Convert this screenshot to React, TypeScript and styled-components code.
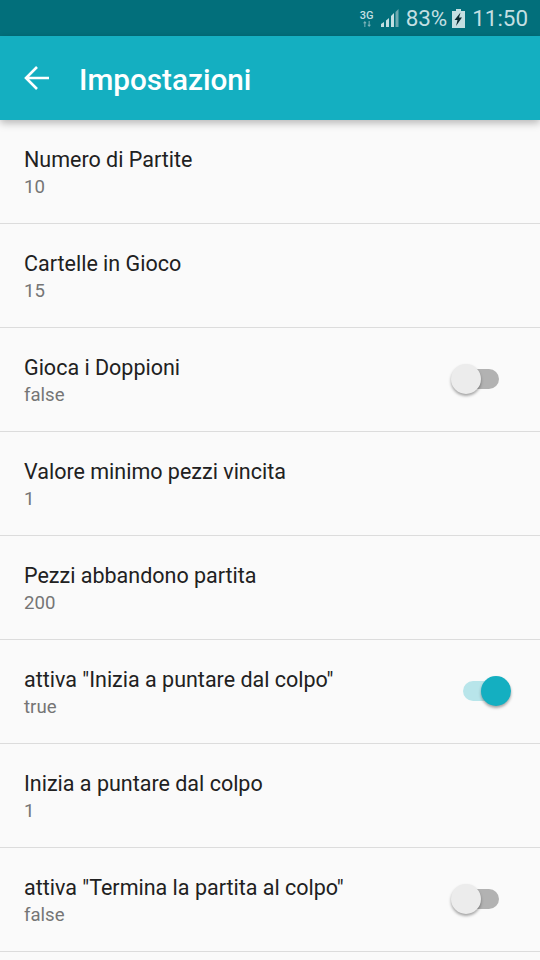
import React from "react";
import styled, { createGlobalStyle } from "styled-components";

const Global = createGlobalStyle`
  html, body { margin: 0; padding: 0; background: #fafafa; }
  body { font-family: Roboto, "Liberation Sans", sans-serif; }
`;

const Screen = styled.div`
  width: 540px;
  height: 960px;
  overflow: hidden;
  background: #fafafa;
  display: flex;
  flex-direction: column;
`;

const StatusBar = styled.div`
  height: 36px;
  flex: none;
  background: #026f7b;
  display: flex;
  align-items: center;
  justify-content: flex-end;
  padding-right: 12px;
  color: #c4dfe2;
  font-size: 22.4px;
  line-height: 36px;
`;

const NetLabel = styled.div`
  display: flex;
  flex-direction: column;
  align-items: center;
  margin-right: 6px;
  width: 14px;
`;

const NetText = styled.span`
  font-size: 11px;
  line-height: 11px;
  font-weight: 500;
  margin-top: 1px;
`;

const Percent = styled.span`
  margin-left: 7px;
`;

const Clock = styled.span`
  margin-left: 7px;
`;

const Battery = styled.svg`
  margin-left: 5px;
`;

const Header = styled.header`
  height: 84px;
  flex: none;
  background: #14afc1;
  display: flex;
  align-items: center;
  padding-left: 24px;
  gap: 30px;
  box-shadow: 0 3px 8px rgba(0, 0, 0, 0.28);
  position: relative;
  z-index: 1;
`;

const Title = styled.h1`
  margin: 3px 0 0;
  color: #fff;
  font-size: 29.7px;
  font-weight: 500;
  line-height: 34px;
`;

const List = styled.div`
  display: flex;
  flex-direction: column;
`;

const Row = styled.div`
  height: 104px;
  box-sizing: border-box;
  flex: none;
  border-bottom: 1px solid #dcdcdc;
  padding: 0 41px 0 24px;
  display: flex;
  align-items: center;
  justify-content: space-between;
`;

const RowText = styled.div`
  display: flex;
  flex-direction: column;
  margin-top: 3px;
`;

const RowTitle = styled.div`
  font-size: 21.5px;
  line-height: 28px;
  color: #212121;
`;

const RowValue = styled.div`
  font-size: 18.6px;
  line-height: 26px;
  color: #757575;
`;

const Track = styled.div<{ $on: boolean }>`
  position: relative;
  width: 36px;
  height: 20px;
  border-radius: 10px;
  margin-top: -1px;
  background: ${(p) => (p.$on ? "#b8e5ea" : "#b2b2b2")};
`;

const Thumb = styled.div<{ $on: boolean }>`
  position: absolute;
  top: -5px;
  left: ${(p) => (p.$on ? "18px" : "-12px")};
  width: 30px;
  height: 30px;
  border-radius: 50%;
  background: ${(p) => (p.$on ? "#14afc1" : "#ececec")};
  box-shadow: 0 2px 3px rgba(0, 0, 0, 0.35);
`;

const rows: { title: string; value: string; toggle?: boolean }[] = [
  { title: "Numero di Partite", value: "10" },
  { title: "Cartelle in Gioco", value: "15" },
  { title: "Gioca i Doppioni", value: "false", toggle: true },
  { title: "Valore minimo pezzi vincita", value: "1" },
  { title: "Pezzi abbandono partita", value: "200" },
  { title: 'attiva "Inizia a puntare dal colpo"', value: "true", toggle: true },
  { title: "Inizia a puntare dal colpo", value: "1" },
  { title: 'attiva "Termina la partita al colpo"', value: "false", toggle: true },
];

export default function App() {
  return (
    <Screen>
      <Global />
      <StatusBar>
        <NetLabel>
          <NetText>3G</NetText>
          <svg width="10" height="6" viewBox="0 0 10 7" fill="none" stroke="#7fb5bb" strokeWidth="1.2">
            <path d="M2.5 7V1M1 2.6L2.5 1 4 2.6M7.5 0v6M6 4.4L7.5 6 9 4.4" />
          </svg>
        </NetLabel>
        <svg width="19" height="18" viewBox="0 0 19 18">
          <path d="M1 15l3-2v5H1z" fill="#c4dfe2" />
          <path d="M6 11.5l3-2.5v9H6z" fill="#c4dfe2" />
          <path d="M11 7l3-3v14h-3z" fill="#c4dfe2" />
          <path d="M15.5 3l3-3v18h-3z" fill="#6fa9b0" />
        </svg>
        <Percent>83%</Percent>
        <Battery width="13" height="19" viewBox="0 0 13 19">
          <path d="M4 0h5v2h4v17H0V2h4z" fill="#c4dfe2" />
          <path d="M8.5 3.5L2.5 11h3l-1.5 6 6-8.5H7z" fill="#0b2a30" />
        </Battery>
        <Clock>11:50</Clock>
      </StatusBar>
      <Header>
        <svg width="25" height="24" viewBox="0 0 25 24" fill="none" stroke="#fff" strokeWidth="2.6">
          <path d="M25 12H2M13 1L2 12l11 11" />
        </svg>
        <Title>Impostazioni</Title>
      </Header>
      <List>
        {rows.map((r) => (
          <Row key={r.title}>
            <RowText>
              <RowTitle>{r.title}</RowTitle>
              <RowValue>{r.value}</RowValue>
            </RowText>
            {r.toggle && (
              <Track $on={r.value === "true"}>
                <Thumb $on={r.value === "true"} />
              </Track>
            )}
          </Row>
        ))}
      </List>
    </Screen>
  );
}
